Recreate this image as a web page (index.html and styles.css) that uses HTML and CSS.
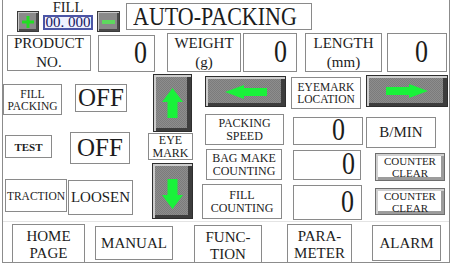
FILE: index.html
```html
<!DOCTYPE html>
<html>
<head>
<meta charset="utf-8">
<link rel="stylesheet" href="styles.css">
</head>
<body>
<div class="screen">
  <div class="row-top">
    <div class="sbtn plus-btn"><svg width="12" height="12" viewBox="0 0 12 12"><rect x="4.5" y="0" width="3" height="12" fill="#22dd22"/><rect x="0" y="4.5" width="12" height="3" fill="#22dd22"/></svg></div>
    <div class="fill-group">
      <div class="fill-label">FILL</div>
      <div class="fill-val">00. 000</div>
    </div>
    <div class="sbtn minus-btn"><svg width="13" height="4" viewBox="0 0 13 4"><rect x="0" y="0" width="13" height="4" fill="#5ed85e"/></svg></div>
    <div class="box title"><span class="tall">AUTO-PACKING</span></div>
  </div>

  <div class="row-info">
    <div class="box lbl product">PRODUCT<br>NO.</div>
    <div class="box num n1"><span class="tall">0</span></div>
    <div class="box lbl weight">WEIGHT<br>(g)</div>
    <div class="box num n2"><span class="tall">0</span></div>
    <div class="box lbl length">LENGTH<br>(mm)</div>
    <div class="box num n3"><span class="tall">0</span></div>
  </div>

  <div class="middle">
    <div class="col col-a">
      <div class="arow a1">
        <div class="box small fillpack">FILL<br>PACKING</div>
        <div class="box off off1">OFF</div>
      </div>
      <div class="arow a2">
        <div class="box small test">TEST</div>
        <div class="box off off2">OFF</div>
      </div>
      <div class="arow a3">
        <div class="box small traction">TRACTION</div>
        <div class="box mid loosen">LOOSEN</div>
      </div>
    </div>

    <div class="col col-b">
      <div class="abtn up"><svg width="21" height="30" viewBox="0 0 21 30"><polygon points="10.5,0 21,14 15.5,14 15.5,30 5.5,30 5.5,14 0,14" fill="#19f23a"/></svg></div>
      <div class="box med eyemark">EYE<br>MARK</div>
      <div class="abtn down"><svg width="21" height="30" viewBox="0 0 21 30"><polygon points="5.5,0 15.5,0 15.5,16 21,16 10.5,30 0,16 5.5,16" fill="#19f23a"/></svg></div>
    </div>

    <div class="col col-c">
      <div class="abtn left"><svg width="42" height="14" viewBox="0 0 42 14"><polygon points="0,7 19,0 19,3 42,3 42,11 19,11 19,14" fill="#19f23a"/></svg></div>
      <div class="box med pspeed">PACKING<br>SPEED</div>
      <div class="box med bagmake">BAG MAKE<br>COUNTING</div>
      <div class="box med fillcount">FILL<br>COUNTING</div>
    </div>

    <div class="col col-d">
      <div class="box small eyeloc">EYEMARK<br>LOCATION</div>
      <div class="box num d1"><span class="tall">0</span></div>
      <div class="box num d2"><span class="tall">0</span></div>
      <div class="box num d3"><span class="tall">0</span></div>
    </div>

    <div class="col col-e">
      <div class="abtn right"><svg width="42" height="14" viewBox="0 0 42 14"><polygon points="42,7 23,0 23,3 0,3 0,11 23,11 23,14" fill="#19f23a"/></svg></div>
      <div class="box mid bmin">B/MIN</div>
      <div class="cbtn c1">COUNTER<br>CLEAR</div>
      <div class="cbtn c2">COUNTER<br>CLEAR</div>
    </div>
  </div>

  <div class="row-nav">
    <div class="box nav home">HOME<br>PAGE</div>
    <div class="box nav manual">MANUAL</div>
    <div class="box nav func">FUNC-<br>TION</div>
    <div class="box nav para">PARA-<br>METER</div>
    <div class="box nav alarm">ALARM</div>
  </div>
</div>
</body>
</html>
```

FILE: styles.css
```css
* { box-sizing: border-box; }
html, body { margin: 0; padding: 0; background: #fff; }
body, .screen, .box, .cbtn, .fill-label, .fill-val {
  font-family: "Liberation Serif", "DejaVu Serif", "Times New Roman", Times, serif;
}
body { color: #1c1c1c; }

.screen {
  margin-left: 2px;
  width: 448px;
  height: 263px;
  border-left: 1px solid #8c8c8c;
  border-right: 1px solid #8c8c8c;
  border-bottom: 1px solid #8c8c8c;
  overflow: hidden;
}

.box {
  border: 1px solid #8a8a8a;
  background: #fff;
  display: flex;
  align-items: center;
  justify-content: center;
  text-align: center;
  flex: none;
}
.tall { display: inline-block; transform: scaleY(1.18); }

/* top row */
.row-top { display: flex; height: 33px; align-items: flex-start; }
.sbtn {
  flex: none;
  display: flex; align-items: center; justify-content: center;
  background: #8a8a8a;
  border: 1px solid #3a3a3a;
  box-shadow: inset 1px 1px 0 #c8c8c8, inset -2px -2px 0 #4a4a4a;
  margin-top: 11px;
  height: 21px;
}
.plus-btn { margin-left: 14px; width: 22px; }
.minus-btn { margin-left: 4px; width: 23px; }
.fill-group { margin-left: 4px; width: 50px; display: flex; flex-direction: column; align-items: center; }
.fill-label { font-size: 14.5px; line-height: 13px; height: 14px; padding-top: 1px; }
.fill-val {
  margin-top: 1px;
  width: 50px; height: 15px;
  border: 2px solid #4b55a6;
  background: #eef0ff;
  color: #15155e;
  font-size: 15px; line-height: 11px;
  text-align: center;
  white-space: nowrap;
  overflow: hidden;
}
.title {
  margin-left: 6px; margin-top: 3px;
  width: 186px; height: 27px;
  font-size: 22px;
  justify-content: flex-start;
  padding-left: 6px;
}

/* info row */
.row-info { display: flex; height: 39px; align-items: flex-start; }
.lbl { font-size: 15px; line-height: 19px; }
.num { font-size: 26px; justify-content: flex-end; }
.product { margin-left: 4px; margin-top: 2px; width: 84px; height: 36px; }
.n1 { margin-left: 7px; margin-top: 2px; width: 57px; height: 37px; padding-right: 7px; }
.weight { margin-left: 12px; width: 74px; height: 39px; }
.n2 { margin-left: 2px; width: 54px; height: 39px; padding-right: 9px; }
.length { margin-left: 8px; width: 77px; height: 39px; }
.n3 { margin-left: 5px; width: 60px; height: 39px; padding-right: 18px; }

/* middle */
.middle { display: flex; height: 150px; border-bottom: 1px solid #e4e4e4; }
.col { display: flex; flex-direction: column; align-items: flex-start; flex: none; }
.small { font-size: 11.5px; line-height: 12px; }
.med { font-size: 12px; line-height: 13px; }
.mid { font-size: 15px; }
.off { font-size: 25px; }

.col-a { width: 130px; }
.arow { display: flex; align-items: flex-start; }
.a1 { margin-top: 12px; }
.fillpack { width: 59px; height: 31px; }
.off1 { margin-left: 13px; width: 52px; height: 28px; }
.a2 { margin-top: 17px; }
.test { margin-left: 2px; margin-top: 3px; width: 47px; height: 23px; font-size: 11px; font-weight: bold; }
.off2 { margin-left: 18px; width: 60px; height: 32px; }
.a3 { margin-top: 15px; }
.traction { margin-left: 2px; width: 62px; height: 33px; }
.loosen { margin-left: 1px; margin-top: 1px; width: 65px; height: 35px; }

.abtn {
  flex: none;
  display: flex; align-items: center; justify-content: center;
  border: 1px solid #2e2e2e;
  background-color: #838383;
  background-image: repeating-conic-gradient(#7b7b7b 0 25%, #8d8d8d 0 50%);
  background-size: 2px 2px;
  box-shadow: inset 2px 2px 0 #cdcdcd, inset -4px -3px 0 #3d3d3d;
}

.col-b { margin-left: 15px; width: 45px; }
.up { margin-left: 5px; margin-top: 2px; width: 39px; height: 58px; }
.eyemark { margin-top: 1px; width: 45px; height: 27px; }
.down { margin-left: 4px; margin-top: 3px; width: 41px; height: 56px; padding-top: 6px; }

.col-c { margin-left: 9px; width: 84px; }
.left { margin-left: 3px; margin-top: 4px; width: 81px; height: 31px; }
.pspeed { margin-left: 3px; margin-top: 7px; width: 79px; height: 31px; }
.bagmake { margin-left: 4px; margin-top: 4px; width: 76px; height: 31px; }
.fillcount { margin-top: 4px; width: 80px; height: 35px; }

.col-d { margin-left: 5px; width: 72px; }
.eyeloc { margin-top: 5px; width: 70px; height: 32px; }
.d1 { margin-left: 2px; margin-top: 8px; width: 70px; height: 28px; padding-right: 17px; }
.d2 { margin-left: 2px; margin-top: 5px; width: 68px; height: 30px; padding-right: 5px; }
.d3 { margin-left: 2px; margin-top: 5px; width: 69px; height: 35px; padding-right: 7px; }

.col-e { margin-left: 3px; width: 82px; }
.right { margin-top: 3px; width: 82px; height: 32px; }
.bmin { margin-top: 10px; width: 70px; height: 31px; }
.cbtn {
  flex: none;
  display: flex; align-items: center; justify-content: center;
  text-align: center;
  margin-left: 9px; width: 70px;
  font-size: 11px; line-height: 12px;
  background: #fff;
  border: 1px solid #6e6e6e;
  box-shadow: inset 2px 2px 0 #d0d0d0, inset -3px -3px 0 #9c9c9c;
}
.c1 { margin-top: 5px; height: 28px; }
.c2 { margin-top: 7px; height: 27px; }

/* nav row */
.row-nav { display: flex; align-items: flex-start; }
.nav { font-size: 15px; line-height: 17px; }
.home { margin-left: 9px; margin-top: 2px; width: 73px; height: 40px; padding-top: 2px; }
.manual { margin-left: 10px; margin-top: 4px; width: 78px; height: 34px; }
.func { margin-left: 21px; margin-top: 3px; width: 68px; height: 40px; padding-top: 2px; }
.para { margin-left: 25px; margin-top: 2px; width: 65px; height: 40px; padding-top: 2px; }
.alarm { margin-left: 20px; margin-top: 3px; width: 69px; height: 36px; }
```
